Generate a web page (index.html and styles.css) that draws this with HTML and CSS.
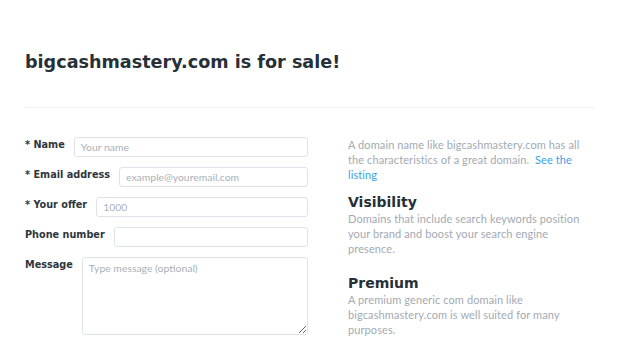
FILE: index.html
```html
<!DOCTYPE html>
<html lang="en">
<head>
<meta charset="utf-8">
<title>bigcashmastery.com is for sale!</title>
<link rel="stylesheet" href="styles.css">
</head>
<body>
<div class="page">
  <h1 class="title">bigcashmastery.com is for sale!</h1>
  <hr class="divider">
  <div class="columns">
    <form class="offer-form">
      <div class="row">
        <label class="label" for="name">* Name</label>
        <input class="field" id="name" type="text" placeholder="Your name">
      </div>
      <div class="row">
        <label class="label" for="email">* Email address</label>
        <input class="field" id="email" type="text" placeholder="example@youremail.com">
      </div>
      <div class="row">
        <label class="label" for="offer">* Your offer</label>
        <input class="field" id="offer" type="text" placeholder="1000">
      </div>
      <div class="row">
        <label class="label" for="phone">Phone number</label>
        <input class="field" id="phone" type="text">
      </div>
      <div class="row">
        <label class="label" for="msg">Message</label>
        <textarea class="field area" id="msg" placeholder="Type message (optional)"></textarea>
      </div>
    </form>
    <div class="info">
      <p class="text intro">A domain name like bigcashmastery.com has all the characteristics of a great domain.&nbsp; <a class="link" href="#">See the listing</a></p>
      <h2 class="sub">Visibility</h2>
      <p class="text">Domains that include search keywords position your brand and boost your search engine presence.</p>
      <h2 class="sub premium">Premium</h2>
      <p class="text">A premium generic com domain like bigcashmastery.com is well suited for many purposes.</p>
    </div>
  </div>
</div>
</body>
</html>
```

FILE: styles.css
```css
html, body {
  margin: 0;
  padding: 0;
  background: #ffffff;
}

.page {
  padding: 51px 25px 0 25px;
  width: 570px;
}

.title {
  margin: 0;
  font-family: "DejaVu Sans", sans-serif;
  font-weight: bold;
  font-size: 17.6px;
  line-height: 22px;
  color: #263036;
}

.divider {
  margin: 34px 0 0 0;
  border: 0;
  height: 1px;
  background: #eceff3;
}

.columns {
  display: flex;
  gap: 40px;
  margin-top: 29px;
}

.offer-form {
  width: 283px;
  display: flex;
  flex-direction: column;
  gap: 10px;
}

.row {
  display: flex;
  align-items: flex-start;
  gap: 9px;
}

.label {
  font-family: "DejaVu Sans", sans-serif;
  font-weight: bold;
  font-size: 9.7px;
  line-height: 12px;
  padding-top: 2px;
  color: #2f363c;
  white-space: nowrap;
}

.field {
  flex: 1;
  min-width: 0;
  box-sizing: border-box;
  height: 20px;
  margin: 0;
  border: 1px solid #dfe3e8;
  border-radius: 3px;
  padding: 0 6px;
  font-family: "Lato", sans-serif;
  font-weight: 400;
  font-size: 10.4px;
  color: #555;
  background: #fff;
}

.field::placeholder {
  color: #a9b0b9;
}

.area {
  height: 78px;
  padding: 4px 6px;
  resize: vertical;
}

.info {
  flex: 1;
  padding-right: 14px;
}

.text {
  margin: 0;
  font-family: "Lato", sans-serif;
  font-weight: 400;
  font-size: 11px;
  line-height: 15px;
  letter-spacing: 0.1px;
  color: #a2aab3;
}

.link {
  color: #3d9fe8;
  text-decoration: none;
}

.sub {
  margin: 11px 0 0 0;
  font-family: "DejaVu Sans", sans-serif;
  font-weight: bold;
  font-size: 14px;
  line-height: 18px;
  color: #263036;
}

.premium {
  margin-top: 18px;
}
```
